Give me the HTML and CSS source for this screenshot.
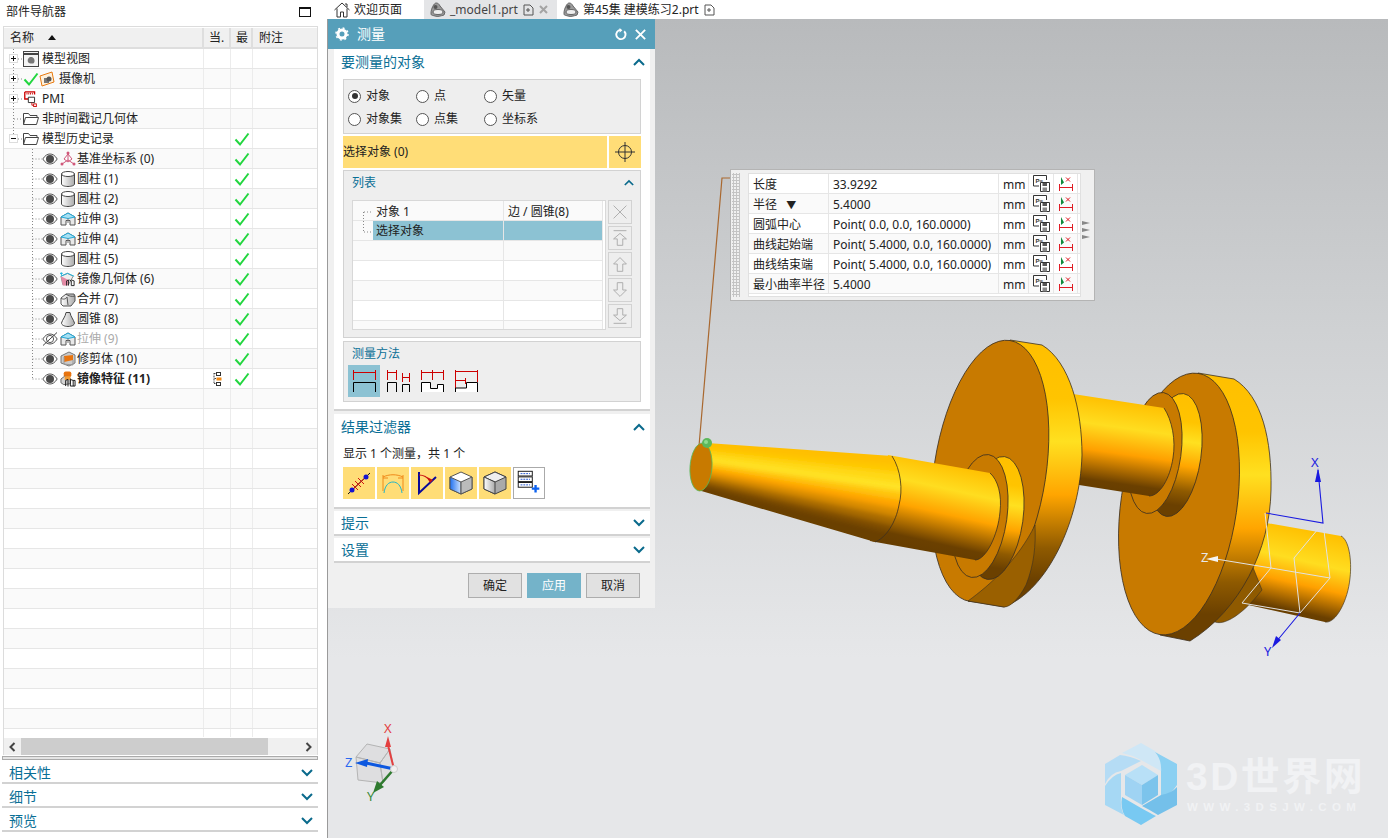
FILE: index.html
```html
<!DOCTYPE html>
<html lang="zh">
<head>
<meta charset="utf-8">
<title>测量</title>
<link rel="stylesheet" href="styles.css">
</head>
<body>
<svg class="defs" aria-hidden="true">
  <defs>
    <linearGradient id="gTube" x1="0" y1="0" x2="0" y2="1">
      <stop offset="0" stop-color="#ffbf00"/><stop offset=".22" stop-color="#ffc400"/><stop offset=".38" stop-color="#ffe020"/><stop offset=".58" stop-color="#ffa500"/><stop offset=".78" stop-color="#8f5a00"/><stop offset=".9" stop-color="#6b4000"/><stop offset="1" stop-color="#6b4000"/>
    </linearGradient>
    <linearGradient id="gCyl1" gradientUnits="userSpaceOnUse" x1="945" y1="462" x2="925" y2="552">
      <stop offset="0" stop-color="#ffbf00"/><stop offset=".28" stop-color="#ffdd20"/><stop offset=".55" stop-color="#ffa400"/><stop offset=".88" stop-color="#6b4000"/><stop offset="1" stop-color="#663d00"/>
    </linearGradient>
    <linearGradient id="gCyl2" gradientUnits="userSpaceOnUse" x1="1125" y1="400" x2="1112" y2="492">
      <stop offset="0" stop-color="#ffbf00"/><stop offset=".3" stop-color="#ffdd20"/><stop offset=".58" stop-color="#ffa000"/><stop offset=".9" stop-color="#6b4000"/><stop offset="1" stop-color="#663d00"/>
    </linearGradient>
    <linearGradient id="gCyl3" gradientUnits="userSpaceOnUse" x1="1305" y1="528" x2="1285" y2="616">
      <stop offset="0" stop-color="#ffbf00"/><stop offset=".36" stop-color="#ffdd20"/><stop offset=".62" stop-color="#ffa000"/><stop offset=".92" stop-color="#6b4000"/><stop offset="1" stop-color="#663d00"/>
    </linearGradient>
    <linearGradient id="gGrey" x1="0" y1="0" x2="1" y2="0">
      <stop offset="0" stop-color="#fff"/><stop offset="1" stop-color="#aaa"/>
    </linearGradient>
    <linearGradient id="gBlue" x1="0" y1="0" x2="1" y2="0">
      <stop offset="0" stop-color="#1e6ff0"/><stop offset="1" stop-color="#cfe3ff"/>
    </linearGradient>
    <filter id="soft" x="-5%" y="-20%" width="110%" height="140%"><feGaussianBlur stdDeviation="2.500"/></filter>
    <clipPath id="coneClip"><path d="M707 443 892 456C901 470 903 490 899 505 896 522 886 538 875 542L698 490Z"/></clipPath>

    <symbol id="i-check" viewBox="0 0 16 16"><path d="M1.500 8.500 6 13.500 14.500 2.500" fill="none" stroke="#22d63f" stroke-width="2"/></symbol>
    <symbol id="i-eye" viewBox="0 0 16 12"><path d="M.8 6C3 2.400 5.400 1 8 1s5 1.400 7.200 5c-2.200 3.600-4.600 5-7.200 5S3 9.600.8 6Z" fill="#fff" stroke="#555"/><circle cx="8" cy="6" r="4" fill="#4a4a4a"/></symbol>
    <symbol id="i-eyeoff" viewBox="0 0 16 14"><path d="M.8 7C3 3.400 5.400 2 8 2s5 1.400 7.200 5c-2.200 3.600-4.600 5-7.200 5S3 10.600.8 7Z" fill="none" stroke="#555"/><circle cx="8" cy="7" r="3.600" fill="none" stroke="#555"/><path d="M1 13.500 15 .5" stroke="#444"/></symbol>
    <symbol id="i-folder" viewBox="0 0 16 14"><path d="M.5 12.500v-11h5l1.500 2h7v2M.5 12.500l2-7h13l-2 7Z" fill="#fff" stroke="#444"/></symbol>
    <symbol id="i-view" viewBox="0 0 16 16"><rect x=".5" y=".5" width="15" height="15" fill="#f4f4f4" stroke="#444"/><path d="M1 3h14" stroke="#444" stroke-width="2"/><path d="M5 11c-1-3 1-5 3-5s4 2 3.500 4.500-2 2-3 2-3 0-3.500-1.500Z" fill="#777"/></symbol>
    <symbol id="i-cam" viewBox="0 0 16 16"><path d="M1 5 13 1l2 10-12 4Z" fill="#fdf0dc" stroke="#e87a10"/><path d="M5 7h5v5H5Z" fill="#777"/><circle cx="10" cy="8" r="2.500" fill="#555"/></symbol>
    <symbol id="i-pmi" viewBox="0 0 16 18"><path d="M1 1h11v3M1 1v8h4" fill="none" stroke="#c00" stroke-width="1.500"/><path d="M3 3h7" stroke="#c00" stroke-dasharray="1 1" stroke-width="2"/><path d="M5 7h7v6H5Z" fill="#fff" stroke="#222"/><path d="M9 13v3h3" fill="none" stroke="#c00"/><rect x="11" y="14.500" width="3" height="3" fill="#fff" stroke="#c00"/></symbol>
    <symbol id="i-csys" viewBox="0 0 16 16"><g fill="none" stroke="#d0587a"><path d="M8 1v8M8 9l-6 4M8 9l6 4M4 8l4-5 4 5-4 3Z"/></g><circle cx="8" cy="2" r="1.500" fill="#d0587a"/><circle cx="2" cy="13" r="1.500" fill="#d0587a"/><circle cx="14" cy="13" r="1.500" fill="#d0587a"/></symbol>
    <symbol id="i-cyl" viewBox="0 0 14 16"><path d="M.5 3v10c0 1.400 3 2.500 6.500 2.500s6.500-1.100 6.500-2.500V3Z" fill="url(#gGrey)" stroke="#444"/><ellipse cx="7" cy="3" rx="6.500" ry="2.500" fill="#fff" stroke="#444"/></symbol>
    <symbol id="i-ext" viewBox="0 0 16 16"><path d="M1 6v8h5V9.500h4V14h5V6L8 2Z" fill="#e8e8e8" stroke="#555"/><path d="M1 6 8 2l7 4-7 1.500Z" fill="#a8e0f2" stroke="#25a9d8"/><path d="M8 7.500V12" stroke="#777"/></symbol>
    <symbol id="i-mirg" viewBox="0 0 17 16"><path d="M1 5l7-3 6 3-5 9H3Z" fill="#eee" stroke="#888"/><path d="M1 5 9 9l-1 6H3Z" fill="#e58aa5"/><path d="M0 2h3M1.500 1v3" stroke="#19b3dc"/><path d="M1 5l7-3 7 3" fill="none" stroke="#19b3dc"/><path d="M7 15v-5l2-1v6M12 15v-5l-2-1M12 15h3v-5l-3-1" fill="none" stroke="#222"/></symbol>
    <symbol id="i-unite" viewBox="0 0 16 16"><path d="M1 7l5-4h8l1 2v5l-4 5H3l-2-2Z" fill="url(#gGrey)" stroke="#555"/><path d="M1 7c2 2 5 1 6-1l1 8" fill="none" stroke="#555"/><path d="M6 3c2 2 6 3 9 2" fill="none" stroke="#555"/></symbol>
    <symbol id="i-cone" viewBox="0 0 14 16"><path d="M5 1.500h4c.5 4 3.500 7 4.500 10.500 0 2-3 3.500-6.500 3.500S.5 14 .5 12C1.500 8.500 4.500 5.500 5 1.500Z" fill="url(#gGrey)" stroke="#444"/></symbol>
    <symbol id="i-trim" viewBox="0 0 16 16"><path d="M1 5l8-4 6 3v8l-6 3-8-3Z" fill="#c9c9c9" stroke="#777"/><path d="M4 5l9-1v5l-9 2Z" fill="#e8740f"/><path d="M4 6v7l9 1V9" fill="none" stroke="#999"/></symbol>
    <symbol id="i-mirf" viewBox="0 0 17 16"><rect x="4" y="0" width="8" height="6" rx="2" fill="#e8740f"/><path d="M1 8l4-3 6 2v6l-7 1-3-2Z" fill="#d4d4d4" stroke="#666"/><rect x="5" y="5" width="6" height="4" fill="#f29a33"/><path d="M6 15.500v-6l2.500-1v7.500M14 15.500v-6l-3-1v7M11 15.500h5v-6h-2" fill="none" stroke="#111"/></symbol>
    <symbol id="i-flag" viewBox="0 0 9 14"><path d="M3.500 1.500H1M1 1v10M3 6.500H1M1 11.500h3" fill="none" stroke="#444" stroke-dasharray="1 .5"/><rect x="3.500" y=".5" width="4" height="3" fill="#fff" stroke="#333"/><rect x="3.500" y="5.500" width="5" height="3" fill="#f28a14"/><rect x="3.500" y="10.500" width="4" height="3" fill="#fff" stroke="#333"/></symbol>
    <symbol id="i-part" viewBox="0 0 16 16"><path d="M1 11c0-4 3-10 5-10s3 1 4 3l5 6-1 3c-4 1-6 2-9 1s-4 0-4-3Z" fill="#9a9a9a" stroke="#666"/><ellipse cx="8" cy="10" rx="5" ry="2.500" fill="#eee" stroke="#666"/><circle cx="5.500" cy="5" r="2" fill="#555"/></symbol>
    <symbol id="i-save" viewBox="0 0 17 17"><path d="M.5.500h13V5M.5.500V11H6" fill="#fff" stroke="#333"/><text class="ps" x="2.500" y="7.500">P=</text><path d="M7.500 7.500h9v9h-9Z" fill="#fff" stroke="#333"/><rect x="9.500" y="8" width="4.500" height="3" fill="#555"/><rect x="9.500" y="12.500" width="4.500" height="4" fill="#888"/></symbol>
    <symbol id="i-dim" viewBox="0 0 16 16"><path d="M1.500 8v7M14.500 8v7M1.500 11.500h13" stroke="#e01b24" fill="none"/><path d="M3 1v8l3-2.500Z" fill="#0d8a3a"/><path d="M8 1.500l4 4M12 1.500l-4 4" stroke="#e01b24"/></symbol>

    <symbol id="m-a" viewBox="0 0 32 32"><path d="M5.500 7.500h22M5.500 5v10M27.500 5v10" fill="none" stroke="#c00"/><path d="M5.500 27V17.500h22V27" fill="none" stroke="#000"/></symbol>
    <symbol id="m-b" viewBox="0 0 32 32"><path d="M5.500 7.500h9M5.500 5v10M14.500 5v10M20.500 12.500h7M20.500 8v9M27.500 8v9" fill="none" stroke="#c00"/><path d="M5.500 27v-9.500h9V27M20.500 27v-7.500h7V27" fill="none" stroke="#000"/></symbol>
    <symbol id="m-c" viewBox="0 0 32 32"><path d="M5.500 7.500h22M5.500 5v10M16.500 5v10M27.500 5v10" fill="none" stroke="#c00"/><path d="M5.500 27v-9.500h9v6h7v-4h6V27Z" fill="#fff"/><path d="M5.500 27v-9.500h9v6h7v-4h6V27" fill="none" stroke="#000"/></symbol>
    <symbol id="m-d" viewBox="0 0 32 32"><path d="M5.500 6.500h22M5.500 5v18M27.500 5v12M5.500 15.500h10M15.500 13v6" fill="none" stroke="#c00"/><path d="M5.500 27v-4h11v-5h11v9Z" fill="#fff"/><path d="M5.500 27v-4h11v-5.500h11V27" fill="none" stroke="#000"/></symbol>

    <symbol id="f-a" viewBox="0 0 32 32"><path d="M5 27 27 6" stroke="#111"/><path d="M9 23 23 10M12 14l6 6M15 11l6 6M9 17l6 6" stroke="#d01010" fill="none"/><circle cx="9" cy="23" r="2.500" fill="#1414d0"/><circle cx="23" cy="10" r="2.500" fill="#1414d0"/></symbol>
    <symbol id="f-b" viewBox="0 0 32 32"><path d="M6 8v16M26 8v16M6 10c6-3 14-3 20 0" fill="none" stroke="#f08a1a"/><path d="M6 11h5M26 11h-5" stroke="#f08a1a"/><path d="M7 26c1-8 5-11 9-11s8 3 9 11" fill="none" stroke="#25b5c8"/></symbol>
    <symbol id="f-c" viewBox="0 0 32 32"><path d="M8 5v21L25 10" fill="none" stroke="#0a0a9a" stroke-width="2"/><path d="M8 8c5 0 9 3 11 6" fill="none" stroke="#c81010" stroke-width="1.200"/><path d="M22 13l-6-3 3 6Z" fill="#c81010"/></symbol>
    <symbol id="f-d" viewBox="0 0 32 32"><path d="M16 5 27 10v12l-11 5-11-5V10Z" fill="#fff" stroke="#555"/><path d="M5 10l11 5v12L5 22Z" fill="url(#gBlue)" stroke="#555"/><path d="M16 15l11-5v12l-11 5Z" fill="#bbb" stroke="#555"/></symbol>
    <symbol id="f-e" viewBox="0 0 32 32"><path d="M16 5 27 10v12l-11 5-11-5V10Z" fill="#aaa" stroke="#444"/><path d="M5 10l11-5 11 5-11 5Z" fill="#eee" stroke="#444"/><path d="M5 10l11 5v12L5 22Z" fill="url(#gGrey)" stroke="#444"/></symbol>
    <symbol id="f-f" viewBox="0 0 32 32"><g fill="#fff" stroke="#111"><rect x="4.500" y="3.500" width="15" height="5"/><rect x="4.500" y="9.500" width="15" height="5"/><rect x="4.500" y="15.500" width="15" height="5"/></g><path d="M7 6h10M7 12h10M7 18h10" stroke="#1b4fd0" stroke-dasharray="2 1"/><path d="M23 18v8M19 22h8" stroke="#0d62f0" stroke-width="2.500"/></symbol>
    <symbol id="c-up" viewBox="0 0 12 8"><path d="M1 7 6 2l5 5" fill="none" stroke="#0a6a8c" stroke-width="2"/></symbol>
    <symbol id="c-down" viewBox="0 0 12 8"><path d="M1 1l5 5 5-5" fill="none" stroke="#0a6a8c" stroke-width="2"/></symbol>
  </defs>
</svg>

<div class="app">
  <aside class="nav">
    <div class="nav-title">
      <span>部件导航器</span>
      <span class="max-btn"></span>
    </div>
    <div class="tree">
      <div class="tree-head">
        <div class="c-name h-name">名称<span class="sort"></span></div>
        <div class="c-cur">当.</div>
        <div class="c-new">最</div>
        <div class="c-note">附注</div>
      </div>
      <div class="tree-body">
        <svg class="tree-lines" width="60" height="340" aria-hidden="true">
          <path d="M13.500 0V90M18 10H23M18 30H23M18 50H23M14 70H23M18 90H23M32.500 100V331M32.500 110H42M32.500 130H42M32.500 150H42M32.500 170H42M32.500 190H42M32.500 210H42M32.500 230H42M32.500 250H42M32.500 270H42M32.500 290H42M32.500 310H42M32.500 330H42" fill="none" stroke="#888" stroke-dasharray="1 2"/>
        </svg>
        <div class="row"><div class="c-name lv0"><span class="exp plus"></span><svg class="ic16"><use href="#i-view"/></svg><span class="lbl">模型视图</span></div><div class="c-cur"></div><div class="c-new"></div><div class="c-note"></div></div>
        <div class="row"><div class="c-name lv0"><span class="exp plus"></span><svg class="ic16"><use href="#i-check"/></svg><svg class="ic16"><use href="#i-cam"/></svg><span class="lbl lbl-cam">摄像机</span></div><div class="c-cur"></div><div class="c-new"></div><div class="c-note"></div></div>
        <div class="row"><div class="c-name lv0"><span class="exp plus"></span><svg class="ic16"><use href="#i-pmi"/></svg><span class="lbl">PMI</span></div><div class="c-cur"></div><div class="c-new"></div><div class="c-note"></div></div>
        <div class="row"><div class="c-name lv0"><span class="exp none"></span><svg class="ic16"><use href="#i-folder"/></svg><span class="lbl">非时间戳记几何体</span></div><div class="c-cur"></div><div class="c-new"></div><div class="c-note"></div></div>
        <div class="row"><div class="c-name lv0"><span class="exp minus"></span><svg class="ic16"><use href="#i-folder"/></svg><span class="lbl">模型历史记录</span></div><div class="c-cur"></div><div class="c-new"><svg class="ic16"><use href="#i-check"/></svg></div><div class="c-note"></div></div>
        <div class="row"><div class="c-name lv1"><svg class="eye"><use href="#i-eye"/></svg><svg class="ic16"><use href="#i-csys"/></svg><span class="lbl">基准坐标系 (0)</span></div><div class="c-cur"></div><div class="c-new"><svg class="ic16"><use href="#i-check"/></svg></div><div class="c-note"></div></div>
        <div class="row"><div class="c-name lv1"><svg class="eye"><use href="#i-eye"/></svg><svg class="ic16"><use href="#i-cyl"/></svg><span class="lbl">圆柱 (1)</span></div><div class="c-cur"></div><div class="c-new"><svg class="ic16"><use href="#i-check"/></svg></div><div class="c-note"></div></div>
        <div class="row"><div class="c-name lv1"><svg class="eye"><use href="#i-eye"/></svg><svg class="ic16"><use href="#i-cyl"/></svg><span class="lbl">圆柱 (2)</span></div><div class="c-cur"></div><div class="c-new"><svg class="ic16"><use href="#i-check"/></svg></div><div class="c-note"></div></div>
        <div class="row"><div class="c-name lv1"><svg class="eye"><use href="#i-eye"/></svg><svg class="ic16"><use href="#i-ext"/></svg><span class="lbl">拉伸 (3)</span></div><div class="c-cur"></div><div class="c-new"><svg class="ic16"><use href="#i-check"/></svg></div><div class="c-note"></div></div>
        <div class="row"><div class="c-name lv1"><svg class="eye"><use href="#i-eye"/></svg><svg class="ic16"><use href="#i-ext"/></svg><span class="lbl">拉伸 (4)</span></div><div class="c-cur"></div><div class="c-new"><svg class="ic16"><use href="#i-check"/></svg></div><div class="c-note"></div></div>
        <div class="row"><div class="c-name lv1"><svg class="eye"><use href="#i-eye"/></svg><svg class="ic16"><use href="#i-cyl"/></svg><span class="lbl">圆柱 (5)</span></div><div class="c-cur"></div><div class="c-new"><svg class="ic16"><use href="#i-check"/></svg></div><div class="c-note"></div></div>
        <div class="row"><div class="c-name lv1"><svg class="eye"><use href="#i-eye"/></svg><svg class="ic16"><use href="#i-mirg"/></svg><span class="lbl">镜像几何体 (6)</span></div><div class="c-cur"></div><div class="c-new"><svg class="ic16"><use href="#i-check"/></svg></div><div class="c-note"></div></div>
        <div class="row"><div class="c-name lv1"><svg class="eye"><use href="#i-eye"/></svg><svg class="ic16"><use href="#i-unite"/></svg><span class="lbl">合并 (7)</span></div><div class="c-cur"></div><div class="c-new"><svg class="ic16"><use href="#i-check"/></svg></div><div class="c-note"></div></div>
        <div class="row"><div class="c-name lv1"><svg class="eye"><use href="#i-eye"/></svg><svg class="ic16"><use href="#i-cone"/></svg><span class="lbl">圆锥 (8)</span></div><div class="c-cur"></div><div class="c-new"><svg class="ic16"><use href="#i-check"/></svg></div><div class="c-note"></div></div>
        <div class="row"><div class="c-name lv1"><svg class="eye"><use href="#i-eyeoff"/></svg><svg class="ic16"><use href="#i-ext"/></svg><span class="lbl dim">拉伸 (9)</span></div><div class="c-cur"></div><div class="c-new"><svg class="ic16"><use href="#i-check"/></svg></div><div class="c-note"></div></div>
        <div class="row"><div class="c-name lv1"><svg class="eye"><use href="#i-eye"/></svg><svg class="ic16"><use href="#i-trim"/></svg><span class="lbl">修剪体 (10)</span></div><div class="c-cur"></div><div class="c-new"><svg class="ic16"><use href="#i-check"/></svg></div><div class="c-note"></div></div>
        <div class="row"><div class="c-name lv1"><svg class="eye"><use href="#i-eye"/></svg><svg class="ic16"><use href="#i-mirf"/></svg><span class="lbl strong">镜像特征 (11)</span></div><div class="c-cur"><svg class="flag"><use href="#i-flag"/></svg></div><div class="c-new"><svg class="ic16"><use href="#i-check"/></svg></div><div class="c-note"></div></div>
        <div class="row"><div class="c-name"></div><div class="c-cur"></div><div class="c-new"></div><div class="c-note"></div></div>
        <div class="row"><div class="c-name"></div><div class="c-cur"></div><div class="c-new"></div><div class="c-note"></div></div>
        <div class="row"><div class="c-name"></div><div class="c-cur"></div><div class="c-new"></div><div class="c-note"></div></div>
        <div class="row"><div class="c-name"></div><div class="c-cur"></div><div class="c-new"></div><div class="c-note"></div></div>
        <div class="row"><div class="c-name"></div><div class="c-cur"></div><div class="c-new"></div><div class="c-note"></div></div>
        <div class="row"><div class="c-name"></div><div class="c-cur"></div><div class="c-new"></div><div class="c-note"></div></div>
        <div class="row"><div class="c-name"></div><div class="c-cur"></div><div class="c-new"></div><div class="c-note"></div></div>
        <div class="row"><div class="c-name"></div><div class="c-cur"></div><div class="c-new"></div><div class="c-note"></div></div>
        <div class="row"><div class="c-name"></div><div class="c-cur"></div><div class="c-new"></div><div class="c-note"></div></div>
        <div class="row"><div class="c-name"></div><div class="c-cur"></div><div class="c-new"></div><div class="c-note"></div></div>
        <div class="row"><div class="c-name"></div><div class="c-cur"></div><div class="c-new"></div><div class="c-note"></div></div>
        <div class="row"><div class="c-name"></div><div class="c-cur"></div><div class="c-new"></div><div class="c-note"></div></div>
        <div class="row"><div class="c-name"></div><div class="c-cur"></div><div class="c-new"></div><div class="c-note"></div></div>
        <div class="row"><div class="c-name"></div><div class="c-cur"></div><div class="c-new"></div><div class="c-note"></div></div>
        <div class="row"><div class="c-name"></div><div class="c-cur"></div><div class="c-new"></div><div class="c-note"></div></div>
        <div class="row"><div class="c-name"></div><div class="c-cur"></div><div class="c-new"></div><div class="c-note"></div></div>
        <div class="row"><div class="c-name"></div><div class="c-cur"></div><div class="c-new"></div><div class="c-note"></div></div>
        <div class="row"><div class="c-name"></div><div class="c-cur"></div><div class="c-new"></div><div class="c-note"></div></div>
      </div>
      <div class="hscroll">
        <svg class="sc-arrow" viewBox="0 0 8 10"><path d="M6 1 2 5l4 4" fill="none" stroke="#444" stroke-width="2"/></svg>
        <div class="sc-track"><div class="sc-thumb"></div></div>
        <svg class="sc-arrow" viewBox="0 0 8 10"><path d="M2 1l4 4-4 4" fill="none" stroke="#444" stroke-width="2"/></svg>
      </div>
    </div>
    <div class="grip"></div>
    <div class="acc"><span>相关性</span><svg class="caret"><use href="#c-down"/></svg></div>
    <div class="acc"><span>细节</span><svg class="caret"><use href="#c-down"/></svg></div>
    <div class="acc"><span>预览</span><svg class="caret"><use href="#c-down"/></svg></div>
  </aside>

  <main class="main">
    <div class="tabs">
      <div class="tab tab-home">
        <svg class="tab-ic" viewBox="0 0 16 16"><path d="M.5 8 8 1l7.500 7M3 6.500V15h3.500v-5h3v5H13V6.500M11 2h2v3" fill="none" stroke="#333"/></svg>
        <span>欢迎页面</span>
      </div>
      <div class="tab tab-active">
        <svg class="tab-ic"><use href="#i-part"/></svg>
        <span class="tab-text">_model1.prt</span>
        <svg class="tab-doc" viewBox="0 0 11 12"><path d="M1 1h6l3 3v7H1ZM3 6h4M5 4v4" fill="none" stroke="#555"/></svg>
        <svg class="tab-x" viewBox="0 0 9 9"><path d="M1 1l7 7M8 1 1 8" fill="none" stroke="#a4a4a4" stroke-width="2"/></svg>
      </div>
      <div class="tab tab-other">
        <svg class="tab-ic"><use href="#i-part"/></svg>
        <span>第45集 建模练习2.prt</span>
        <svg class="tab-doc" viewBox="0 0 11 12"><path d="M1 1h6l3 3v7H1ZM3 6h4M5 4v4" fill="none" stroke="#555"/></svg>
      </div>
    </div>

    <div class="viewport">
      <svg class="scene" viewBox="328 19 1060 819" aria-hidden="true">
        <!-- leader -->
        <path d="M731 178H722L699 446" fill="none" stroke="#a9682f" stroke-width="1.200"/>

        <!-- right-hand journal -->
        <path d="M1255 521 1341 536C1349 540 1352 560 1350 578 1348 600 1336 624 1325 622L1235 602Z" fill="url(#gCyl3)"/>
        <path d="M1341 536C1349 540 1352 560 1350 578 1348 600 1336 624 1325 622" fill="none" stroke="#4a3a20" stroke-width=".7"/>
        <path d="M1212 620C1220 628 1240 618 1262 590L1250 560 1215 600Z" fill="#8f5a00" stroke="#3d3020" stroke-width=".6"/>

        <!-- disc 2 -->
        <path d="M1198 373 1234 379C1262 396 1272 440 1271 490 1270 550 1240 610 1190 641L1160 635Z" fill="url(#gTube)" stroke="#3d3020" stroke-width=".8"/>
        <ellipse cx="1179" cy="504" rx="58" ry="132" transform="rotate(8.300 1179 504)" fill="#c87a00" stroke="#3d3020" stroke-width=".8"/>
        <!-- collar 2 -->
        <ellipse cx="1175" cy="455" rx="26" ry="62" transform="rotate(8 1175 455)" fill="url(#gTube)" stroke="#3d3020" stroke-width=".8"/>
        <ellipse cx="1155" cy="453" rx="26" ry="61" transform="rotate(8 1155 453)" fill="#c87a00" stroke="#3d3020" stroke-width=".8"/>

        <!-- middle journal -->
        <path d="M1060 392 1164 408C1172 420 1176 440 1173 458 1170 478 1160 496 1149 496L1060 482Z" fill="url(#gCyl2)"/>
        <path d="M1164 408C1172 420 1176 440 1173 458 1170 478 1160 496 1149 496" fill="none" stroke="#3d3020" stroke-width=".8"/>

        <!-- disc 1 -->
        <path d="M1010 340 1042 345C1070 362 1082 410 1082 455 1080 520 1048 590 1004 607L968 601Z" fill="url(#gTube)" stroke="#3d3020" stroke-width=".8"/>
        <ellipse cx="990" cy="471" rx="56" ry="132" transform="rotate(8.700 990 471)" fill="#c87a00" stroke="#3d3020" stroke-width=".8"/>
        <path d="M968 601C990 585 1018 560 1035 525 1036 545 1034 565 1026 585 1018 600 1010 607 1004 607Z" fill="#9a6000" stroke="#3d3020" stroke-width=".6"/>

        <!-- collar 1 -->
        <ellipse cx="996" cy="518" rx="27" ry="62" transform="rotate(8 996 518)" fill="url(#gTube)" stroke="#3d3020" stroke-width=".8"/>
        <ellipse cx="980" cy="516" rx="27" ry="62" transform="rotate(8 980 516)" fill="#c87a00" stroke="#3d3020" stroke-width=".8"/>

        <!-- stepped shaft -->
        <path d="M888 455 990 473C998 480 1002 495 1000 512 998 535 986 560 975 560L870 541Z" fill="url(#gCyl1)"/>
        <path d="M990 473C998 480 1002 495 1000 512 998 535 986 560 975 560" fill="none" stroke="#3d3020" stroke-width=".8"/>
        <g clip-path="url(#coneClip)">
          <g filter="url(#soft)">
            <path d="M707 420 905 430 905 580 690 510Z" fill="#ffbf00"/>
            <path d="M706 448 905 466 905 580 690 510Z" fill="#ffc800"/>
            <path d="M705 452 905 474 905 580 690 510Z" fill="#ffd818"/>
            <path d="M704 457 905 484 905 580 690 510Z" fill="#ffe428"/>
            <path d="M703 462 905 492 905 580 690 510Z" fill="#ffc410"/>
            <path d="M702.500 466.500 905 501 905 580 690 510Z" fill="#ffa400"/>
            <path d="M702 471 905 510 905 580 690 510Z" fill="#d98c00"/>
            <path d="M701 476 905 519 905 580 690 510Z" fill="#a86a00"/>
            <path d="M700 481 905 528 905 580 690 510Z" fill="#7f4e00"/>
            <path d="M699 485 905 536 905 580 690 510Z" fill="#6b4000"/>
          </g>
        </g>
        <path d="M892 456C901 470 903 490 899 505 896 522 886 538 875 542" fill="none" stroke="#3d3020" stroke-width=".8"/>

        <!-- selected end face -->
        <ellipse cx="701" cy="467" rx="11" ry="24" transform="rotate(4 701 467)" fill="#c87a00" stroke="#58b85a" stroke-width=".8"/>
        <circle cx="707" cy="443" r="5" fill="#5cb85c"/>
        <circle cx="706" cy="442" r="2" fill="#8fdc8f"/>

        <!-- WCS -->
        <g fill="none" stroke="#e2e2e2" stroke-width="1">
          <path d="M1265 513 1268 540 1271 568 1330 578 1323 523 1294 558 1300 613 1330 578M1271 568 1242 603 1300 613"/>
          <path d="M1271 568 1216 559"/>
        </g>
        <path d="M1206 559 1218 556 1218 562Z" fill="#f4f4f4"/>
        <g fill="none" stroke="#1a1ae0" stroke-width="1.100">
          <path d="M1266 513 1323 523 1318 470M1300 613 1276 642"/>
        </g>
        <path d="M1318 468 1315 482 1321 482Z" fill="#1a1ae0"/>
        <path d="M1272 648 1276 636 1281 640Z" fill="#1a1ae0"/>
        <text class="axis ax-blue" x="1311" y="467">X</text>
        <text class="axis ax-blue" x="1264" y="656">Y</text>
        <text class="axis ax-white" x="1201" y="562">Z</text>

        <!-- triad -->
        <g fill="#bcbcbc" fill-opacity=".2" stroke="#b4b4b4">
          <path d="M367 744 390 749 380 763 356 757Z"/>
          <path d="M356 757 380 763 383 783 358 780Z"/>
          <path d="M380 763 390 749 394 769 383 783Z"/>
        </g>
        <path d="M394 769 388 745" stroke="#e34040" stroke-width="2"/>
        <path d="M388 736 385 747 391 747Z" fill="#e34040"/>
        <path d="M394 769 366 763" stroke="#0d58e0" stroke-width="3"/>
        <path d="M355 763 368 759 367 767Z" fill="#0d58e0"/>
        <path d="M394 769 380 785" stroke="#2f7a2f" stroke-width="2.500"/>
        <path d="M373 793 377 781 384 787Z" fill="#2f7a2f"/>
        <circle cx="394" cy="769" r="3.500" fill="#f0f0f0" stroke="#ccc"/>
        <text class="axis ax-red" x="384" y="733">X</text>
        <text class="axis ax-zblue" x="345" y="767">Z</text>
        <text class="axis ax-green" x="367" y="801">Y</text>

        <!-- watermark -->
        <path d="M1122 753 1141 743 1155 751Q1163 760 1161 771L1141 760Q1132 755 1122 753Z" fill="#cfe7f6"/>
        <path d="M1155 752 1177 764V785Q1170 796 1161 797V772Q1162 760 1155 752Z" fill="#8bd0f2"/>
        <path d="M1177 787V805L1158 815Q1150 810 1142 806L1161 795Q1172 793 1177 787Z" fill="#74c0ea"/>
        <path d="M1156 816 1141 825 1125 816Q1120 808 1122 797L1141 808Q1150 813 1156 816Z" fill="#78c9f2"/>
        <path d="M1105 786Q1112 775 1121 773V797Q1120 808 1124 815L1105 805Z" fill="#a6d8f4"/>
        <path d="M1105 764 1120 755Q1130 756 1141 761L1121 771Q1110 773 1105 784Z" fill="#b5dcf5"/>
        <path d="M1142 765 1158 775 1142 785 1125 775Z" fill="#b8e0f7"/>
        <path d="M1125 775 1142 785V805L1125 795Z" fill="#9fd3f3"/>
        <path d="M1158 775 1142 785V805L1158 795Z" fill="#7cc4ec"/>
        <text class="wm-big" x="1186" y="790">3D世界网</text>
        <text class="wm-small" x="1187" y="811">WWW.3DSJW.COM</text>
      </svg>

      <section class="dialog">
        <header class="dlg-head">
          <svg class="dlg-gear" viewBox="0 0 14 14"><circle cx="7" cy="7" r="4" fill="none" stroke="#fff" stroke-width="3"/><circle cx="7" cy="7" r="6" fill="none" stroke="#fff" stroke-width="1.500" stroke-dasharray="2 2.700"/></svg>
          <span class="dlg-title">测量</span>
          <svg class="dlg-btn" viewBox="0 0 14 14"><path d="M11 3.500A5 5 0 1 1 7 2" fill="none" stroke="#fff" stroke-width="2"/><path d="M6 0v5l3-2.500Z" fill="#fff"/></svg>
          <svg class="dlg-btn" viewBox="0 0 14 14"><path d="M2 2l10 10M12 2 2 12" fill="none" stroke="#fff" stroke-width="2"/></svg>
        </header>
        <div class="sec sec-main">
          <div class="sec-head"><span>要测量的对象</span><svg class="caret"><use href="#c-up"/></svg></div>
          <div class="inset">
            <div class="radios">
              <label class="radio"><i class="dot on"></i>对象</label>
              <label class="radio"><i class="dot"></i>点</label>
              <label class="radio"><i class="dot"></i>矢量</label>
              <label class="radio"><i class="dot"></i>对象集</label>
              <label class="radio"><i class="dot"></i>点集</label>
              <label class="radio"><i class="dot"></i>坐标系</label>
            </div>
            <div class="select-row">
              <div class="select-lbl">选择对象 (0)</div>
              <div class="select-btn">
                <svg viewBox="0 0 22 22"><circle cx="11" cy="11" r="6.500" fill="none" stroke="#333"/><path d="M11 1v20M1 11h20" stroke="#333"/></svg>
              </div>
            </div>
            <div class="listbox">
              <div class="sub-head"><span>列表</span><svg class="caret caret-sm"><use href="#c-up"/></svg></div>
              <div class="list-wrap">
                <div class="ltable">
                  <svg class="ltree" width="24" height="44" aria-hidden="true"><path d="M.5 11V31M1 11H10M1 31H10" fill="none" stroke="#888" stroke-dasharray="1 2"/></svg>
                  <div class="lrow"><div class="lc1">对象 1</div><div class="lc2">边 / 圆锥(8)</div></div>
                  <div class="lrow sel"><div class="lc1">选择对象</div><div class="lc2"></div></div>
                  <div class="lrow"><div class="lc1"></div><div class="lc2"></div></div>
                  <div class="lrow"><div class="lc1"></div><div class="lc2"></div></div>
                  <div class="lrow"><div class="lc1"></div><div class="lc2"></div></div>
                  <div class="lrow"><div class="lc1"></div><div class="lc2"></div></div>
                  <div class="lrow"><div class="lc1"></div><div class="lc2"></div></div>
                </div>
                <div class="lbtns">
                  <div class="lbtn"><svg viewBox="0 0 24 24"><path d="M5 5l14 14M19 5 5 19" stroke="#a8a8a8" fill="none"/></svg></div>
                  <div class="lbtn"><svg viewBox="0 0 24 24"><path d="M5 4h14M12 7l7 6h-4v7H9v-7H5Z" stroke="#a8a8a8" fill="none"/></svg></div>
                  <div class="lbtn"><svg viewBox="0 0 24 24"><path d="M12 5l7 7h-4v8H9v-8H5Z" stroke="#a8a8a8" fill="none"/></svg></div>
                  <div class="lbtn"><svg viewBox="0 0 24 24"><path d="M9 4h6v8h4l-7 7-7-7h4Z" stroke="#a8a8a8" fill="none"/></svg></div>
                  <div class="lbtn"><svg viewBox="0 0 24 24"><path d="M9 4h6v7h4l-7 6-7-6h4ZM5 20h14" stroke="#a8a8a8" fill="none"/></svg></div>
                </div>
              </div>
            </div>
            <div class="method">
              <div class="method-title">测量方法</div>
              <div class="method-icons">
                <div class="mbtn active"><svg><use href="#m-a"/></svg></div>
                <div class="mbtn"><svg><use href="#m-b"/></svg></div>
                <div class="mbtn"><svg><use href="#m-c"/></svg></div>
                <div class="mbtn"><svg><use href="#m-d"/></svg></div>
              </div>
            </div>
          </div>
        </div>
        <div class="sec sec-filter">
          <div class="sec-head"><span>结果过滤器</span><svg class="caret"><use href="#c-up"/></svg></div>
          <div class="inset">
            <div class="filter-text">显示 1 个测量，共 1 个</div>
            <div class="filters">
              <div class="fbtn"><svg><use href="#f-a"/></svg></div>
              <div class="fbtn"><svg><use href="#f-b"/></svg></div>
              <div class="fbtn"><svg><use href="#f-c"/></svg></div>
              <div class="fbtn"><svg><use href="#f-d"/></svg></div>
              <div class="fbtn"><svg><use href="#f-e"/></svg></div>
              <div class="fbtn plain"><svg><use href="#f-f"/></svg></div>
            </div>
          </div>
        </div>
        <div class="sec sec-fold"><div class="sec-head"><span>提示</span><svg class="caret"><use href="#c-down"/></svg></div></div>
        <div class="sec sec-fold"><div class="sec-head"><span>设置</span><svg class="caret"><use href="#c-down"/></svg></div></div>
        <footer class="dlg-foot">
          <button class="btn">确定</button>
          <button class="btn primary">应用</button>
          <button class="btn">取消</button>
        </footer>
      </section>

      <aside class="result">
        <div class="res-grip"></div>
        <div class="res-table">
          <div class="res-row"><div class="r1">长度</div><div class="r2">33.9292</div><div class="r3">mm</div><div class="r4"><svg><use href="#i-save"/></svg></div><div class="r5"><svg><use href="#i-dim"/></svg></div></div>
          <div class="res-row"><div class="r1">半径 <span class="tri">▼</span></div><div class="r2">5.4000</div><div class="r3">mm</div><div class="r4"><svg><use href="#i-save"/></svg></div><div class="r5"><svg><use href="#i-dim"/></svg></div></div>
          <div class="res-row"><div class="r1">圆弧中心</div><div class="r2">Point( 0.0, 0.0, 160.0000)</div><div class="r3">mm</div><div class="r4"><svg><use href="#i-save"/></svg></div><div class="r5"><svg><use href="#i-dim"/></svg></div></div>
          <div class="res-row"><div class="r1">曲线起始端</div><div class="r2">Point( 5.4000, 0.0, 160.0000)</div><div class="r3">mm</div><div class="r4"><svg><use href="#i-save"/></svg></div><div class="r5"><svg><use href="#i-dim"/></svg></div></div>
          <div class="res-row"><div class="r1">曲线结束端</div><div class="r2">Point( 5.4000, 0.0, 160.0000)</div><div class="r3">mm</div><div class="r4"><svg><use href="#i-save"/></svg></div><div class="r5"><svg><use href="#i-dim"/></svg></div></div>
          <div class="res-row"><div class="r1">最小曲率半径</div><div class="r2">5.4000</div><div class="r3">mm</div><div class="r4"><svg><use href="#i-save"/></svg></div><div class="r5"><svg><use href="#i-dim"/></svg></div></div>
        </div>
        <div class="res-more"><i></i><i></i><i></i></div>
      </aside>
    </div>
  </main>
</div>
</body>
</html>
```

FILE: styles.css
```css
* { box-sizing: border-box; }
html, body { margin: 0; height: 100%; overflow: hidden; }
body {
  font-family: "Noto Sans", "Noto Sans CJK SC", sans-serif;
  font-size: 12px;
  line-height: 16px;
  color: #222;
  background: #fff;
}
svg { display: block; }
.defs { position: absolute; width: 0; height: 0; }
.app { display: flex; width: 1388px; height: 838px; }

/* navigator */
.nav { width: 327px; flex: none; display: flex; flex-direction: column; background: #fff; padding-right: 9px; }
.nav-title { height: 26px; flex: none; display: flex; align-items: center; justify-content: space-between; padding: 0 7px 2px 6px; }
.max-btn { width: 12px; height: 10px; border: 1px solid #111; border-top-width: 2px; }
.tree { margin-left: 3px; height: 729px; flex: none; display: flex; flex-direction: column; border: 1px solid #dcdcdc; border-width: 1px 1px 0 1px; }
.tree-head { display: flex; height: 21px; flex: none; background: #f0f0f0; border-bottom: 2px solid #dedede; line-height: 20px; margin-top: 1px; }
.tree-head > div { border-right: 2px solid #dedede; padding-left: 6px; overflow: hidden; white-space: nowrap; }
.tree-head .c-name { padding-left: 6px; }
.tree-head .c-note { border-right: 0; }
.tree-head .c-new, .tree-head .c-cur { padding-left: 5px; }
.sort { display: inline-block; margin-left: 14px; vertical-align: 2px; border: 4.5px solid transparent; border-top-width: 0; border-bottom: 5px solid #111; }
.c-name { width: 200px; flex: none; }
.c-cur { width: 27px; flex: none; }
.c-new { width: 22px; flex: none; }
.c-note { flex: 1; }
.tree-body { position: relative; flex: 1; overflow: hidden; }
.tree-lines { position: absolute; left: -4px; top: 0; }
.row { display: flex; height: 20px; border-bottom: 1px solid #e6e6e6; }
.row:nth-child(odd) { background: #fafafa; }
.row > div { border-right: 1px solid #ececec; display: flex; align-items: center; }
.row > .c-note { border-right: 0; }
.row > .c-new, .row > .c-cur { justify-content: center; }
.lv0 { padding-left: 5px; position: relative; }
.lv1 { padding-left: 38px; position: relative; }
.exp { width: 9px; height: 9px; flex: none; margin-right: 5px; position: relative; border: 1px solid #ddd; background: #fff; }
.exp.none { visibility: hidden; }
.exp::before { content: ""; position: absolute; left: 1px; top: 3px; width: 5px; height: 1px; background: #111; }
.exp.plus::after { content: ""; position: absolute; left: 3px; top: 1px; width: 1px; height: 5px; background: #111; }
.ic16 { width: 16px; height: 16px; flex: none; }
.eye { width: 16px; height: 14px; flex: none; margin-right: 2px; }
.flag { width: 9px; height: 14px; }
.lbl { margin-left: 3px; white-space: nowrap; }
.lv1 .lbl { margin-left: 1px; }
.lbl-cam { margin-left: 4px; }
.dim { color: #aaa; }
.strong { font-weight: 700; }

.hscroll { height: 17px; flex: none; display: flex; align-items: center; background: #f0f0f0; margin-top: 1px; }
.sc-arrow { width: 17px; height: 10px; flex: none; padding: 0 4px; }
.sc-track { flex: 1; height: 100%; }
.sc-thumb { width: 247px; height: 100%; background: #cdcdcd; }
.grip { height: 4px; flex: none; margin: 1px 0 0 2px; background: #e4e4e4; border: 1px solid #aaa; }
.acc { height: 24px; flex: none; margin-left: 2px; display: flex; justify-content: space-between; align-items: center; padding: 3px 5px 0 7px; font-size: 14px; color: #0a6f96; border-bottom: 2px solid #d2d2d2; }
.caret { width: 12px; height: 8px; flex: none; }
.caret-sm { width: 10px; height: 7px; }

/* main */
.main { flex: 1; display: flex; flex-direction: column; min-width: 0; }
.tabs { height: 19px; flex: none; display: flex; background: #fff; padding-left: 1px; }
.tab { display: flex; align-items: center; height: 19px; white-space: nowrap; }
.tab-home { width: 96px; padding-left: 6px; }
.tab-active { width: 133px; background: #e4e5e7; padding-left: 6px; }
.tab-other { padding-left: 6px; }
.tab-ic { width: 16px; height: 16px; margin-right: 4px; flex: none; }
.tab-text { color: #444; }
.tab-doc { width: 11px; height: 12px; margin-left: 5px; flex: none; }
.tab-x { width: 9px; height: 9px; margin-left: 5px; flex: none; }

.viewport { position: relative; flex: 1; border-left: 1px solid #9a9a9a; background: linear-gradient(180deg, #b8babc 0%, #cfd1d3 38%, #e6e7e9 78%, #e6e7e9 100%); }
.scene { position: absolute; left: 0; top: 0; width: 1060px; height: 819px; }
.ps { font: 700 6px "Liberation Sans", sans-serif; fill: #333; }
.axis { font: 13px "Noto Sans", sans-serif; }
.ax-blue { fill: #2020e0; }
.ax-white { fill: #e8e8e8; }
.ax-red { fill: #e34040; }
.ax-zblue { fill: #2a68f0; }
.ax-green { fill: #3a8a3a; }
.wm-big { font: 700 39px "Liberation Sans", "Noto Sans CJK SC", sans-serif; letter-spacing: 2.500px; fill: #f1f2f4; }
.wm-small { font: 700 11.500px "Liberation Sans", sans-serif; letter-spacing: 5.400px; fill: #f1f2f4; }

/* dialog */
.dialog { position: absolute; left: 0; top: 0; width: 327px; height: 589px; background: #f0f0f0; display: flex; flex-direction: column; }
.dlg-head { height: 30px; flex: none; display: flex; align-items: center; background: #569fba; color: #fff; padding: 0 8px 0 7px; }
.dlg-gear { width: 14px; height: 14px; flex: none; }
.dlg-title { flex: 1; margin-left: 8px; font-size: 14px; }
.dlg-btn { width: 13px; height: 13px; margin-left: 7px; flex: none; }
.sec { margin: 0 5px 0 6px; background: #fff; border-bottom: 2px solid #d2d2d2; flex: none; }
.sec-head { display: flex; align-items: center; justify-content: space-between; font-size: 14px; color: #0a6f96; padding: 0 5px 0 7px; height: 23px; }
.sec-main { height: 362px; margin-bottom: 3px; }
.sec-main > .sec-head { height: 26px; margin-bottom: 4px; }
.sec-filter { height: 95px; }
.sec-filter > .sec-head { height: 26px; }
.sec-fold { height: 25px; margin-top: 2px; }
.inset { padding: 0 9px; }
.radios { height: 55px; display: grid; grid-template-columns: 68px 68px 1fr; grid-auto-rows: 23px; align-content: center; padding: 2px 0 0 4px; background: #eee; border: 1px solid #d2d2d2; }
.radio { display: flex; align-items: center; }
.dot { width: 13px; height: 13px; flex: none; margin-right: 5px; border: 1px solid #555; border-radius: 50%; background: #fff; position: relative; }
.dot.on::after { content: ""; position: absolute; left: 2.5px; top: 2.5px; width: 6px; height: 6px; border-radius: 50%; background: #333; }
.select-row { display: flex; gap: 2px; height: 32px; margin-top: 2px; }
.select-lbl { flex: 1; background: #ffdd77; display: flex; align-items: center; }
.select-btn { width: 32px; flex: none; background: #ffdd77; display: flex; align-items: center; justify-content: center; }
.select-btn svg { width: 22px; height: 22px; }
.listbox { height: 168px; margin-top: 2px; background: #eee; border: 1px solid #d2d2d2; padding: 0 8px; }
.sub-head { height: 29px; display: flex; justify-content: space-between; align-items: center; color: #0a6f96; padding-bottom: 6px; }
.sub-head .caret { margin-right: -2px; }
.list-wrap { display: flex; gap: 2px; }
.ltable { width: 254px; height: 130px; flex: none; background: #fff; border: 1px solid #d8d8d8; position: relative; overflow: hidden; }
.ltree { position: absolute; left: 10px; top: 0; }
.lrow { display: flex; height: 20px; border-bottom: 1px solid #e6e6e6; width: 250px; margin-left: 0; }
.lrow:nth-child(even) { background: #fafafa; }
.lc1 { width: 151px; flex: none; padding-left: 23px; border-right: 1px solid #e6e6e6; line-height: 21px; }
.lc2 { width: 99px; flex: none; padding-left: 4px; border-right: 1px solid #e6e6e6; line-height: 21px; }
.lrow.sel .lc1 { line-height: 20px; background: linear-gradient(90deg, #fafafa 20px, #8cc2d3 20px); }
.lrow.sel .lc2 { background: #8cc2d3; }
.lbtns { display: flex; flex-direction: column; gap: 2px; }
.lbtn { width: 24px; height: 24px; border: 1px solid #d2d2d2; background: #eee; }
.lbtn svg { width: 22px; height: 22px; }
.method { height: 61px; margin-top: 3px; background: #eee; border: 1px solid #d2d2d2; padding: 3px 4px; }
.method-title { color: #0a6f96; padding-left: 4px; height: 20px; line-height: 18px; }
.method-icons { display: flex; gap: 2px; }
.mbtn { width: 32px; height: 32px; }
.mbtn svg { width: 32px; height: 32px; }
.mbtn.active { background: #8cc2d3; }
.filter-text { height: 25px; line-height: 27px; }
.filters { display: flex; gap: 2px; margin-top: 2px; }
.fbtn { width: 32px; height: 32px; background: #ffdd77; }
.fbtn svg { width: 32px; height: 32px; margin: 0; }
.fbtn.plain { background: #fff; border: 1px solid #aaa; }
.fbtn.plain svg { width: 30px; height: 30px; }
.dlg-foot { flex: 1; display: flex; justify-content: flex-end; gap: 5px; padding: 10px 15px 0 0; }
.btn { width: 54px; height: 25px; font: inherit; padding: 0; color: #222; background: #e1e1e1; border: 1px solid #adadad; }
.btn.primary { background: #74b3c9; color: #fff; border-color: #74b3c9; }

/* results */
.result { position: absolute; left: 402px; top: 150px; width: 365px; height: 132px; background: #f0f0f0; border: 1px solid #b4b4b4; display: flex; padding: 3px 0 3px 1px; }
.res-grip { width: 8px; flex: none; margin-right: 8px; background-image: radial-gradient(#c4c4c4 1px, transparent 1.200px); background-size: 3px 3px; }
.res-table { width: 333px; flex: none; background: #fff; border: 1px solid #e0e0e0; }
.res-row { display: flex; height: 20px; border-bottom: 1px solid #e6e6e6; align-items: stretch; line-height: 22px; }
.res-row:nth-child(even) { background: #fafafa; }
.res-row > div { border-right: 1px solid #e6e6e6; white-space: nowrap; flex: none; overflow: hidden; }
.r1 { width: 80px; padding-left: 4px; }
.r2 { width: 170px; padding-left: 4px; }
.r3 { width: 30px; padding-left: 4px; }
.r4 { width: 25px; padding: 1px 0 0 4px; }
.r5 { width: 24px; padding: 2px 0 0 4px; }
.r4 svg { width: 17px; height: 17px; }
.r5 svg { width: 16px; height: 16px; }
.tri { margin-left: 6px; font-size: 10px; }
.res-more { flex: 1; display: flex; flex-direction: column; justify-content: center; gap: 3px; padding-left: 1px; margin-top: -10px; }
.res-more i { width: 0; height: 0; border-left: 8px solid #888; border-top: 2px solid transparent; border-bottom: 2px solid transparent; }
```
